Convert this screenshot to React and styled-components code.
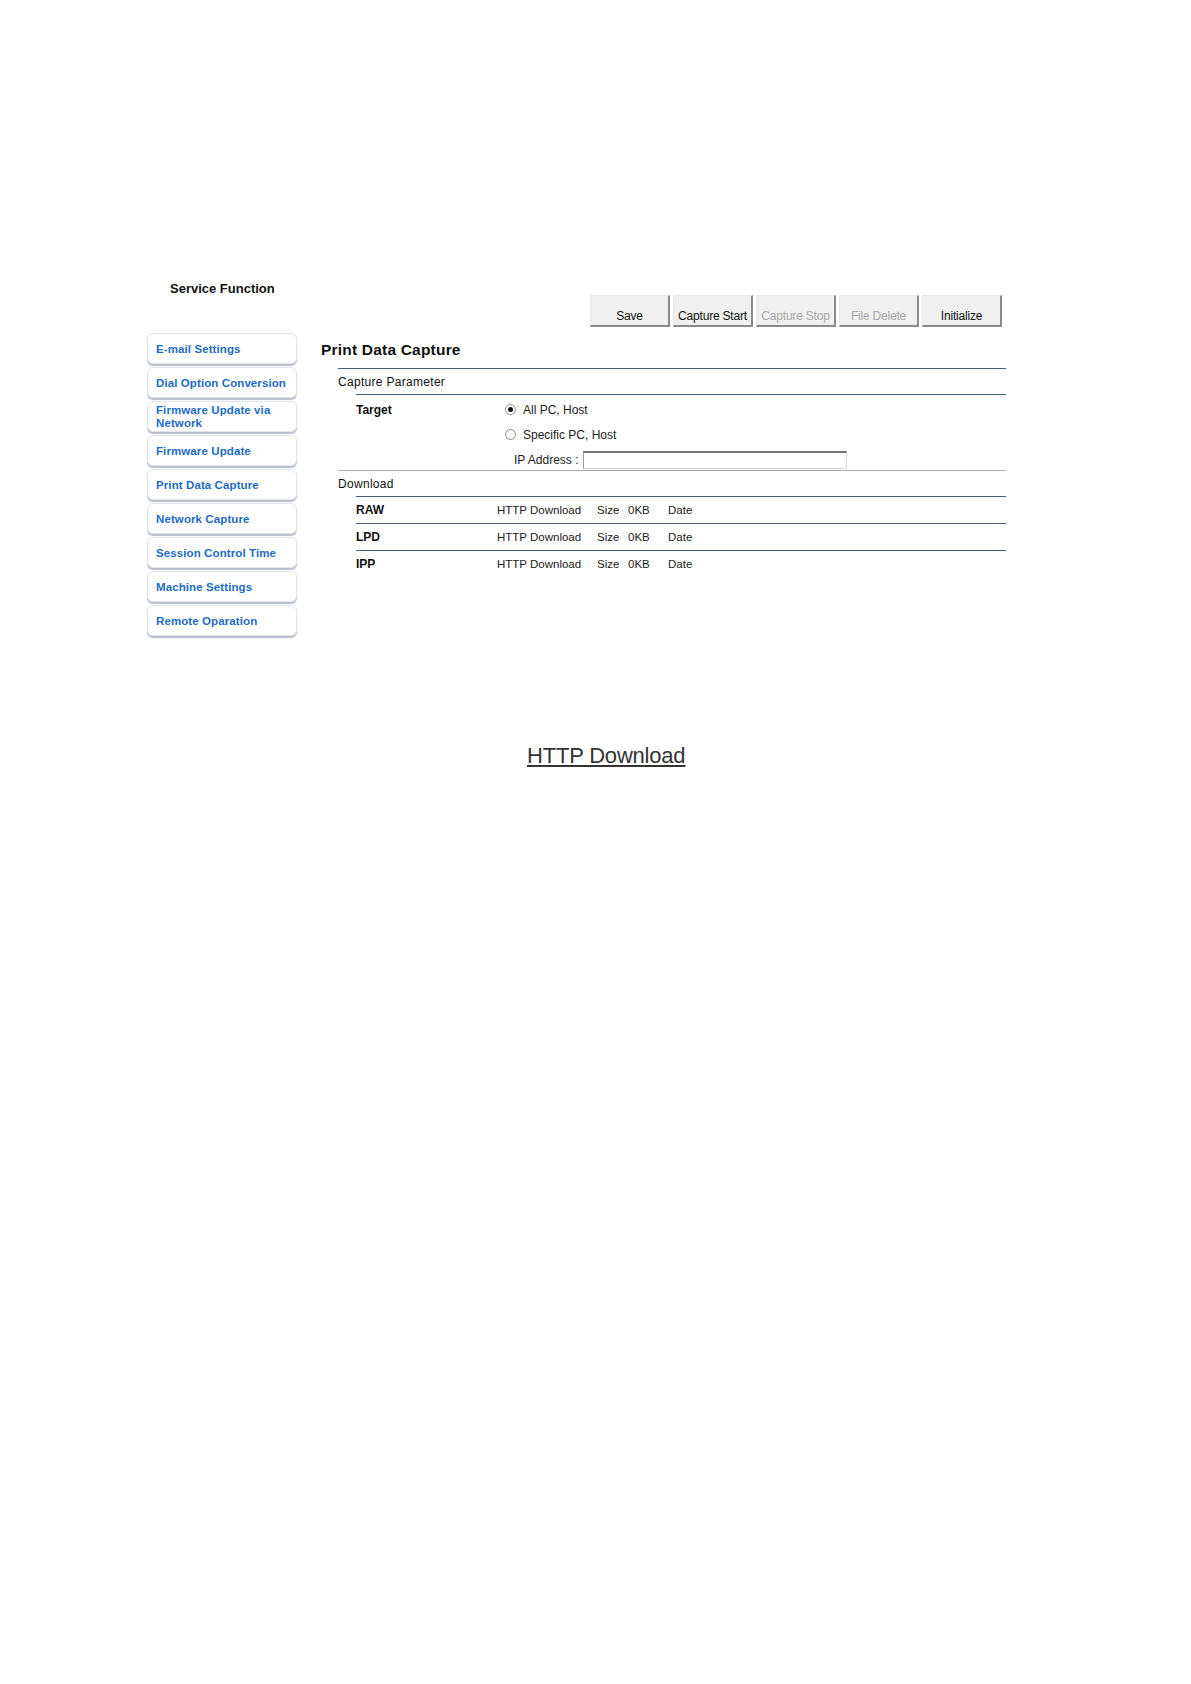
import React from 'react';
import styled, { createGlobalStyle } from 'styled-components';

const GlobalStyle = createGlobalStyle`
  html, body {
    margin: 0;
    padding: 0;
    background: #fff;
  }
  body {
    font-family: "Liberation Sans", Arial, sans-serif;
    color: #222;
  }
`;

const Page = styled.div`
  width: 1191px;
  min-height: 1684px;
  padding-top: 281px;
  box-sizing: border-box;
`;

const Frame = styled.div`
  margin-left: 147px;
  width: 859px;
`;

const Header = styled.div`
  display: flex;
  justify-content: space-between;
  align-items: flex-start;
`;

const PageTitle = styled.div`
  padding-left: 23px;
  font-size: 13px;
  line-height: 16px;
  font-weight: bold;
  color: #111;
`;

const Toolbar = styled.div`
  display: flex;
  gap: 3px;
  margin-top: 14px;
  margin-right: 4px;
`;

const ToolButton = styled.button`
  width: 80px;
  height: 32px;
  padding: 10px 0 0;
  box-sizing: border-box;
  font-family: "Liberation Sans", Arial, sans-serif;
  font-size: 12px;
  letter-spacing: -0.2px;
  background: #f0f0f0;
  color: ${(p) => (p.disabled ? '#a8a8a8' : '#111')};
  border: 1px solid #d4d4d4;
  border-right: 2px solid #8a8a8a;
  border-bottom: 2px solid #8a8a8a;
  border-top-color: #e8e8e8;
  border-left-color: #e8e8e8;
`;

const Body = styled.div`
  display: flex;
  margin-top: 6px;
`;

const Sidebar = styled.nav`
  display: flex;
  flex-direction: column;
  gap: 3px;
  width: 150px;
  flex-shrink: 0;
`;

const NavItem = styled.div`
  height: 31px;
  box-sizing: border-box;
  display: flex;
  align-items: center;
  padding: 1px 8px 0 8px;
  background: #fff;
  border: 1px solid #e2e4ea;
  border-radius: 6px;
  box-shadow: 0 2px 1px #b7bfcc;
  font-size: 11.5px;
  line-height: 13px;
  font-weight: bold;
  color: #1e6cc6;
  letter-spacing: 0.1px;
`;

const Main = styled.div`
  flex: 1;
  margin-left: 24px;
`;

const MainTitle = styled.h2`
  margin: 7px 0 8px;
  font-size: 15.5px;
  line-height: 20px;
  font-weight: bold;
  color: #111;
  letter-spacing: 0.2px;
`;

const Section = styled.div`
  margin-left: 17px;
  border-top: 1px solid ${(p) => p.$line || '#4a5f80'};
`;

const SectionHead = styled.div`
  height: 25px;
  display: flex;
  align-items: center;
  font-size: 12px;
  letter-spacing: 0.3px;
  color: #111;
`;

const SubBlock = styled.div`
  margin-left: 18px;
  border-top: 1px solid #4a5f80;
`;

const ParamGrid = styled.div`
  display: grid;
  grid-template-columns: 149px 1fr;
  padding-top: 2px;
`;

const Label = styled.div`
  height: 25px;
  display: flex;
  align-items: center;
  font-size: 12px;
  font-weight: bold;
  color: #111;
`;

const Options = styled.div`
  display: flex;
  flex-direction: column;
`;

const OptionRow = styled.label`
  height: 25px;
  display: flex;
  align-items: center;
  gap: 7px;
  font-size: 12px;
  color: #222;
`;

const Radio = styled.span`
  width: 11px;
  height: 11px;
  border: 1px solid #8d8d8d;
  border-radius: 50%;
  box-sizing: border-box;
  display: flex;
  align-items: center;
  justify-content: center;
  background: #fafafa;

  &::after {
    content: '';
    width: 5px;
    height: 5px;
    border-radius: 50%;
    background: ${(p) => (p.$checked ? '#111' : 'transparent')};
  }
`;

const IpRow = styled.div`
  height: 21px;
  margin-top: 2px;
  display: flex;
  align-items: center;
  gap: 5px;
  padding-left: 9px;
  font-size: 12px;
  color: #222;
`;

const IpInput = styled.input`
  width: 264px;
  height: 18px;
  box-sizing: border-box;
  border: 1px solid #d6d6d6;
  border-top: 2px solid #777;
  border-left: 1px solid #9a9a9a;
  background: #fff;
  padding: 0;
`;

const DataRow = styled.div`
  height: 26px;
  display: grid;
  grid-template-columns: 141px 100px 31px 40px 1fr;
  align-items: center;
  font-size: 11.5px;
  color: #222;
  border-top: ${(p) => (p.$first ? 'none' : '1px solid #4a5f80')};
`;

const RowLabel = styled.b`
  font-size: 12px;
  color: #111;
`;

const BigLink = styled.a`
  display: inline-block;
  margin: 106px 0 0 380px;
  font-size: 22px;
  line-height: 27px;
  color: #333;
  text-decoration: underline;
  text-decoration-thickness: 2px;
  text-underline-offset: 2px;
  letter-spacing: -0.2px;
`;

const navItems = [
  'E-mail Settings',
  'Dial Option Conversion',
  'Firmware Update via Network',
  'Firmware Update',
  'Print Data Capture',
  'Network Capture',
  'Session Control Time',
  'Machine Settings',
  'Remote Oparation',
];

const rows = ['RAW', 'LPD', 'IPP'];

export default function App() {
  return (
    <Page>
      <GlobalStyle />
      <Frame>
        <Header>
          <PageTitle>Service Function</PageTitle>
          <Toolbar>
            <ToolButton>Save</ToolButton>
            <ToolButton>Capture Start</ToolButton>
            <ToolButton disabled>Capture Stop</ToolButton>
            <ToolButton disabled>File Delete</ToolButton>
            <ToolButton>Initialize</ToolButton>
          </Toolbar>
        </Header>

        <Body>
          <Sidebar>
            {navItems.map((item) => (
              <NavItem key={item}>{item}</NavItem>
            ))}
          </Sidebar>

          <Main>
            <MainTitle>Print Data Capture</MainTitle>

            <Section>
              <SectionHead>Capture Parameter</SectionHead>
              <SubBlock>
                <ParamGrid>
                  <Label>Target</Label>
                  <Options>
                    <OptionRow>
                      <Radio $checked />
                      All PC, Host
                    </OptionRow>
                    <OptionRow>
                      <Radio />
                      Specific PC, Host
                    </OptionRow>
                    <IpRow>
                      IP Address :
                      <IpInput type="text" />
                    </IpRow>
                  </Options>
                </ParamGrid>
              </SubBlock>
            </Section>

            <Section $line="#a9abb3">
              <SectionHead>Download</SectionHead>
              <SubBlock>
                {rows.map((r, i) => (
                  <DataRow key={r} $first={i === 0}>
                    <RowLabel>{r}</RowLabel>
                    <span>HTTP Download</span>
                    <span>Size</span>
                    <span>0KB</span>
                    <span>Date</span>
                  </DataRow>
                ))}
              </SubBlock>
            </Section>
          </Main>
        </Body>

        <div>
          <BigLink href="#">HTTP Download</BigLink>
        </div>
      </Frame>
    </Page>
  );
}
